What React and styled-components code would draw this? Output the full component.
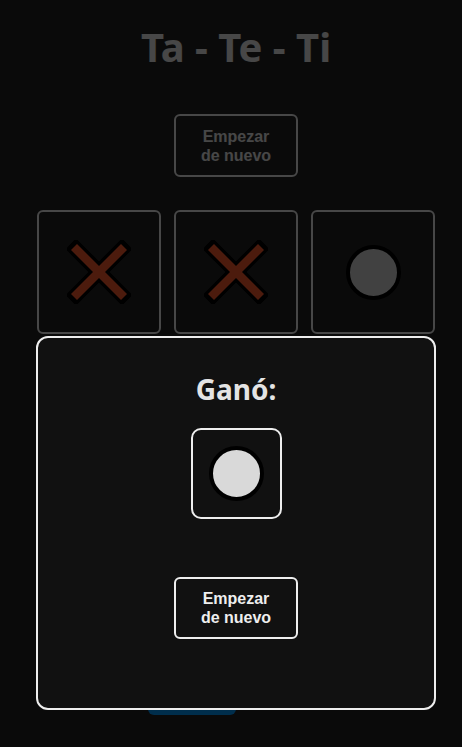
import React from "react"
import styled, { createGlobalStyle } from "styled-components"

const board = ["x", "x", "o", null, null, null, null, null, null]

const GlobalStyle = createGlobalStyle`
  html, body {
    margin: 0;
    padding: 0;
    background: #242424;
    overflow: hidden;
  }
  * {
    box-sizing: border-box;
  }
`;

const Main = styled.main`
  width: 462px;
  min-height: 747px;
  padding: 20px 0 0 10px;
  display: flex;
  flex-direction: column;
  align-items: center;
`;

const Title = styled.h1`
  margin: 0;
  font-family: "Noto Sans", "Open Sans", sans-serif;
  font-weight: 700;
  font-size: 40px;
  line-height: 54px;
  color: #eeeeee;
`;

const Button = styled.button`
  width: 124px;
  height: ${(p) => p.$height || 63}px;
  margin-top: ${(p) => p.$top || 0}px;
  padding: 0 20px;
  background: transparent;
  border: 2px solid #eeeeee;
  border-radius: 6px;
  color: #eeeeee;
  font-family: "Liberation Sans", Arial, sans-serif;
  font-weight: 700;
  font-size: 16px;
  line-height: 19px;
  cursor: pointer;
`;

const Grid = styled.section`
  margin-top: 33px;
  display: grid;
  grid-template-columns: repeat(3, 124px);
  gap: 14px 13px;
`;

const Cell = styled.div`
  width: ${(p) => p.$size || 124}px;
  height: ${(p) => p.$size || 124}px;
  border: 2px solid ${(p) => (p.$plain ? "transparent" : "#eeeeee")};
  background: ${(p) => (p.$selected ? "#0099ff" : "transparent")};
  border-radius: ${(p) => p.$radius || 6}px;
  display: flex;
  align-items: center;
  justify-content: center;
`;

const Turn = styled.section`
  margin-top: 17px;
  display: flex;
  justify-content: center;
`;

const Overlay = styled.div`
  position: fixed;
  inset: 0;
  background: rgba(0, 0, 0, 0.7);
  padding: 336px 0 0 10px;
  display: flex;
  flex-direction: column;
  align-items: center;
`;

const Modal = styled.div`
  width: 400px;
  height: 374px;
  background: #111111;
  border: 2px solid #eeeeee;
  border-radius: 12px;
  display: flex;
  flex-direction: column;
  align-items: center;
`;

const Winner = styled.h2`
  margin: 32px 0 20px;
  font-family: "Noto Sans", "Open Sans", sans-serif;
  font-weight: 700;
  font-size: 28px;
  line-height: 38px;
  color: #e4e4e4;
`;

const Cross = () => (
  <svg width="64" height="64" viewBox="0 0 64 64">
    <g strokeLinecap="square">
      <line x1="9" y1="9" x2="55" y2="55" stroke="#000" strokeWidth="15" />
      <line x1="55" y1="9" x2="9" y2="55" stroke="#000" strokeWidth="15" />
    </g>
    <g strokeLinecap="butt">
      <line x1="7" y1="7" x2="57" y2="57" stroke="#ff5a2e" strokeWidth="8.5" />
      <line x1="57" y1="7" x2="7" y2="57" stroke="#ff5a2e" strokeWidth="8.5" />
    </g>
  </svg>
);

const Circle = styled.span`
  display: block;
  width: 55px;
  height: 55px;
  border-radius: 50%;
  background: #d9d9d9;
  border: 4px solid #000;
`;

const Mark = ({ value }) => {
  if (value === "x") return <Cross />
  if (value === "o") return <Circle />
  return null
}

export default function App() {
  return (
    <>
      <GlobalStyle />
      <Main>
        <Title>Ta - Te - Ti</Title>
        <Button $top={40}>Empezar de nuevo</Button>
        <Grid>
          {board.map((value, i) => (
            <Cell key={i}>
              <Mark value={value} />
            </Cell>
          ))}
        </Grid>
        <Turn>
          <Cell $size={88} $plain $selected>
            <Mark value="x" />
          </Cell>
          <Cell $size={88} $plain>
            <Mark value="o" />
          </Cell>
        </Turn>
      </Main>
      <Overlay>
        <Modal>
          <Winner>Ganó:</Winner>
          <Cell $size={91} $radius={10}>
            <Circle />
          </Cell>
          <Button $top={58} $height={62}>Empezar de nuevo</Button>
        </Modal>
      </Overlay>
    </>
  )
}
